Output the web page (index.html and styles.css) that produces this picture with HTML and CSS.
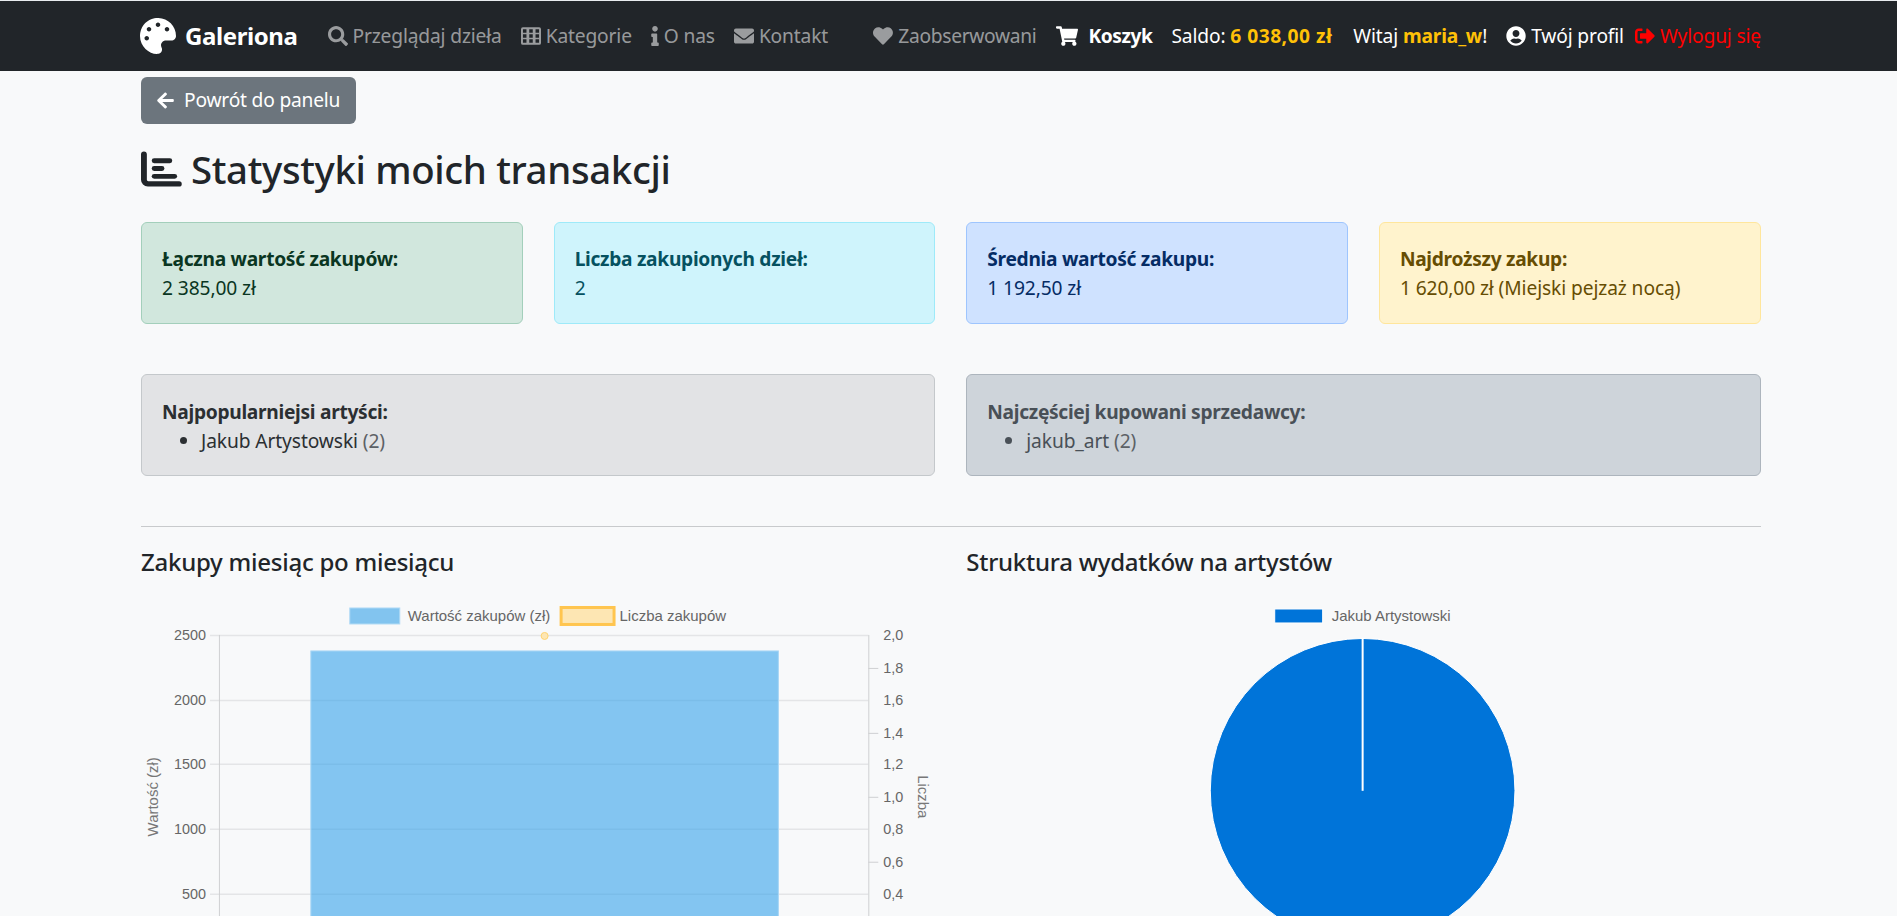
FILE: index.html
```html
<!DOCTYPE html>
<html lang="pl">
<head>
  <meta charset="UTF-8" />
  <meta name="viewport" content="width=device-width, initial-scale=1.0">
  <title>Statystyki moich transakcji - Galeriona</title>
  <link rel="stylesheet" href="styles.css">
</head>
<body>
  <nav class="navbar">
    <a class="brand" href="#">
      <svg class="brand-icon" viewBox="0 0 512 512"><path d="M204.3 5C104.9 24.4 24.8 104.3 5.2 203.4c-37 187 131.7 326.4 258.8 306.7 41.2-6.4 61.4-54.6 42.5-91.7-23.1-45.4 9.9-98.4 60.9-98.4h79.7c35.8 0 64.8-29.6 64.9-65.3C511.5 97.1 368.1-26.9 204.3 5zM96 320c-17.7 0-32-14.3-32-32s14.3-32 32-32 32 14.3 32 32-14.3 32-32 32zm32-128c-17.7 0-32-14.3-32-32s14.3-32 32-32 32 14.3 32 32-14.3 32-32 32zm128-64c-17.7 0-32-14.3-32-32s14.3-32 32-32 32 14.3 32 32-14.3 32-32 32zm128 64c-17.7 0-32-14.3-32-32s14.3-32 32-32 32 14.3 32 32-14.3 32-32 32z"/></svg>
      Galeriona
    </a>
    <div class="nav-links">
      <a class="nav-link" href="#"><svg class="icon" viewBox="0 0 512 512"><path d="M505 442.7L405.3 343c-4.5-4.5-10.6-7-17-7H372c27.6-35.3 44-79.7 44-128C416 93.1 322.9 0 208 0S0 93.1 0 208s93.1 208 208 208c48.3 0 92.7-16.4 128-44v16.3c0 6.4 2.5 12.5 7 17l99.7 99.7c9.4 9.4 24.6 9.4 33.9 0l28.3-28.3c9.4-9.4 9.4-24.6.1-34zM208 336c-70.7 0-128-57.2-128-128 0-70.7 57.2-128 128-128 70.7 0 128 57.2 128 128 0 70.7-57.2 128-128 128z"/></svg>Przeglądaj dzieła</a>
      <a class="nav-link" href="#"><svg class="icon" viewBox="0 0 512 512"><path fill-rule="evenodd" d="M48 32h416a48 48 0 0 1 48 48v352a48 48 0 0 1-48 48H48a48 48 0 0 1-48-48V80a48 48 0 0 1 48-48zM50 84v90h90V84zm161 0v90h90V84zm161 0v90h90V84zM50 211v90h90v-90zm161 0v90h90v-90zm161 0v90h90v-90zM50 338v90h90v-90zm161 0v90h90v-90zm161 0v90h90v-90z"/></svg>Kategorie</a>
      <a class="nav-link" href="#"><svg class="icon icon-info" viewBox="0 0 192 512"><path d="M20 424.229h20V279.771H20c-11.046 0-20-8.954-20-20V212c0-11.046 8.954-20 20-20h112c11.046 0 20 8.954 20 20v212.229h20c11.046 0 20 8.954 20 20V492c0 11.046-8.954 20-20 20H20c-11.046 0-20-8.954-20-20v-47.771c0-11.046 8.954-20 20-20zM96 0C56.235 0 24 32.235 24 72s32.235 72 72 72 72-32.235 72-72S135.764 0 96 0z"/></svg>O nas</a>
      <a class="nav-link" href="#"><svg class="icon" viewBox="0 0 512 512"><path d="M502.3 190.8c3.9-3.1 9.7-.2 9.7 4.7V400c0 26.5-21.5 48-48 48H48c-26.5 0-48-21.5-48-48V195.6c0-5 5.7-7.8 9.7-4.7 22.4 17.4 52.1 39.5 154.1 113.6 21.1 15.4 56.7 47.8 92.2 47.6 35.7.3 72-32.8 92.3-47.6 102-74.1 131.6-96.3 154-113.7zM256 320c23.2.4 56.6-29.2 73.4-41.4 132.7-96.3 142.8-104.7 173.4-128.7 5.8-4.5 9.2-11.5 9.2-18.9v-19c0-26.5-21.5-48-48-48H48C21.5 64 0 85.5 0 112v19c0 7.4 3.4 14.3 9.2 18.9 30.6 23.9 40.7 32.4 173.4 128.7 16.8 12.2 50.2 41.8 73.4 41.4z"/></svg>Kontakt</a>
    </div>
    <div class="nav-right">
      <a class="nav-link nav-watch" href="#"><svg class="icon" viewBox="0 0 512 512"><path d="M462.3 62.6C407.5 15.9 326 20.3 275.6 72.2L256 92.5l-19.6-20.3C186.1 20.3 104.5 15.9 49.7 62.6c-62.8 53.6-66.1 149.8-9.9 207.9l192.5 198.8c12.4 12.8 32.6 12.8 45 0l192.5-198.8c56.3-58.1 53-154.3-9.8-207.9z"/></svg>Zaobserwowani</a>
      <a class="nav-link nav-cart" href="#"><svg class="icon icon-cart" viewBox="0 0 576 512"><path d="M528.12 301.319l47.273-208C578.806 78.301 567.391 64 551.99 64H159.208l-9.166-44.81C147.758 8.021 137.93 0 126.529 0H24C10.745 0 0 10.745 0 24v16c0 13.255 10.745 24 24 24h69.883l70.248 343.435C147.325 417.1 136 435.222 136 456c0 30.928 25.072 56 56 56s56-25.072 56-56c0-15.674-6.447-29.835-16.824-40h209.647C430.447 426.165 424 440.326 424 456c0 30.928 25.072 56 56 56s56-25.072 56-56c0-22.172-12.888-41.332-31.579-50.405l5.517-24.276c3.413-15.018-8.002-29.319-23.403-29.319H218.117l-6.545-32h293.145c11.206 0 20.92-7.754 23.403-18.681z"/></svg>Koszyk</a>
      <span class="nav-text nav-saldo">Saldo: <b class="gold gold-amount">6 038,00 zł</b></span>
      <span class="nav-text">Witaj <b class="gold">maria_w</b>!</span>
      <a class="nav-link nav-profile" href="#"><svg class="icon" viewBox="0 0 496 512"><path d="M248 8C111 8 0 119 0 256s111 248 248 248 248-111 248-248S385 8 248 8zm0 96c48.6 0 88 39.4 88 88s-39.4 88-88 88-88-39.4-88-88 39.4-88 88-88zm0 344c-58.7 0-111.3-26.6-146.5-68.2 18.8-35.4 55.6-59.8 98.5-59.8 2.4 0 4.8.4 7.1 1.1 13 4.2 26.6 6.9 40.9 6.9 14.3 0 28-2.7 40.9-6.9 2.3-.7 4.7-1.1 7.1-1.1 42.9 0 79.7 24.4 98.5 59.8C359.3 421.4 306.7 448 248 448z"/></svg>Twój profil</a>
      <a class="nav-link nav-logout" href="#"><svg class="icon" viewBox="0 0 512 512"><path d="M497 273L329 441c-15 15-41 4.5-41-17v-96H152c-13.3 0-24-10.7-24-24v-96c0-13.3 10.7-24 24-24h136V88c0-21.4 25.9-32 41-17l168 168c9.3 9.4 9.3 24.6 0 34zM192 436v-40c0-6.6-5.4-12-12-12H96c-17.7 0-32-14.3-32-32V160c0-17.7 14.3-32 32-32h84c6.6 0 12-5.4 12-12V76c0-6.6-5.4-12-12-12H96c-53 0-96 43-96 96v192c0 53 43 96 96 96h84c6.6 0 12-5.4 12-12z"/></svg>Wyloguj się</a>
    </div>
  </nav>

  <main class="container">
    <a class="btn-back" href="#"><svg class="icon-back" viewBox="0 0 448 512"><path d="M257.5 445.1l-22.2 22.2c-9.4 9.4-24.6 9.4-33.9 0L7 273c-9.4-9.4-9.4-24.6 0-33.9L201.4 44.7c9.4-9.4 24.6-9.4 33.9 0l22.2 22.2c9.5 9.5 9.3 25-.4 34.3L136.6 216H424c13.3 0 24 10.7 24 24v32c0 13.3-10.7 24-24 24H136.6l120.5 114.8c9.8 9.3 10 24.8.4 34.3z"/></svg>Powrót do panelu</a>

    <h1 class="page-title">
      <svg class="title-icon" viewBox="0 0 42 36"><path d="M0 3a3 3 0 0 1 6 0v26a1.5 1.5 0 0 0 1.5 1.5H39a2.75 2.75 0 0 1 0 5.5H7a7 7 0 0 1-7-7z"/><rect x="11" y="7" width="21" height="5" rx="2.5"/><rect x="11" y="15" width="13" height="5" rx="2.5"/><rect x="11" y="23" width="26" height="5" rx="2.5"/></svg>
      Statystyki moich transakcji
    </h1>

    <section class="stats-row">
      <div class="alert alert-green"><strong>Łączna wartość zakupów:</strong><br>2 385,00 zł</div>
      <div class="alert alert-cyan"><strong>Liczba zakupionych dzieł:</strong><br>2</div>
      <div class="alert alert-blue"><strong>Średnia wartość zakupu:</strong><br>1 192,50 zł</div>
      <div class="alert alert-yellow"><strong>Najdroższy zakup:</strong><br>1 620,00 zł (Miejski pejzaż nocą)</div>
    </section>

    <section class="top-row">
      <div class="alert alert-light">
        <strong>Najpopularniejsi artyści:</strong>
        <ul><li>Jakub Artystowski <span class="count">(2)</span></li></ul>
      </div>
      <div class="alert alert-grey">
        <strong>Najczęściej kupowani sprzedawcy:</strong>
        <ul><li>jakub_art <span class="count">(2)</span></li></ul>
      </div>
    </section>

    <hr class="divider">

    <section class="charts-row">
      <div class="chart-col">
        <h2 class="chart-title">Zakupy miesiąc po miesiącu</h2>
        <svg class="chart" viewBox="0 0 795 400">
          <g class="legend">
            <rect x="209" y="13" width="50" height="16" fill="#82c4ef" stroke="#aed9f5"/>
            <text x="267" y="26">Wartość zakupów (zł)</text>
            <rect x="420.5" y="12.5" width="53" height="17" fill="#fde6b3" stroke="#ffc54f" stroke-width="3"/>
            <text x="479" y="26">Liczba zakupów</text>
          </g>
          <g class="grid">
            <line x1="69" x2="728" y1="40.5" y2="40.5"/>
            <line x1="69" x2="728" y1="105.5" y2="105.5"/>
            <line x1="69" x2="728" y1="169.5" y2="169.5"/>
            <line x1="69" x2="728" y1="234.5" y2="234.5"/>
            <line x1="69" x2="728" y1="299.5" y2="299.5"/>
            <line x1="69" x2="728" y1="364.5" y2="364.5"/>
          </g>
          <g class="ticks">
            <line x1="728" x2="738" y1="73.5" y2="73.5"/>
            <line x1="728" x2="738" y1="138.5" y2="138.5"/>
            <line x1="728" x2="738" y1="202.5" y2="202.5"/>
            <line x1="728" x2="738" y1="267.5" y2="267.5"/>
            <line x1="728" x2="738" y1="332.5" y2="332.5"/>
            <line x1="78.5" x2="78.5" y1="40" y2="400"/>
            <line x1="728.5" x2="728.5" y1="40" y2="400"/>
          </g>
          <rect class="bar" x="170" y="56" width="468" height="344"/>
          <circle class="dot" cx="404" cy="41" r="3.5"/>
          <g class="axis-left">
            <text x="65" y="45">2500</text>
            <text x="65" y="110">2000</text>
            <text x="65" y="174">1500</text>
            <text x="65" y="239">1000</text>
            <text x="65" y="304">500</text>
          </g>
          <g class="axis-right">
            <text x="743" y="45">2,0</text>
            <text x="743" y="78">1,8</text>
            <text x="743" y="110">1,6</text>
            <text x="743" y="143">1,4</text>
            <text x="743" y="174">1,2</text>
            <text x="743" y="207">1,0</text>
            <text x="743" y="239">0,8</text>
            <text x="743" y="272">0,6</text>
            <text x="743" y="304">0,4</text>
          </g>
          <text class="axis-title" transform="translate(17 202) rotate(-90)">Wartość (zł)</text>
          <text class="axis-title" transform="translate(778 202) rotate(90)">Liczba</text>
        </svg>
      </div>
      <div class="chart-col">
        <h2 class="chart-title">Struktura wydatków na artystów</h2>
        <svg class="chart" viewBox="0 0 795 400">
          <g class="legend">
            <rect x="309" y="14" width="48" height="14" fill="#0074d9" stroke="#fff"/>
            <text x="366" y="26">Jakub Artystowski</text>
          </g>
          <circle cx="397" cy="196" r="152.5" fill="#0074d9" stroke="#fff"/>
          <line x1="397" x2="397" y1="43" y2="196" stroke="#fff" stroke-width="2"/>
        </svg>
      </div>
    </section>
  </main>
</body>
</html>
```

FILE: styles.css
```css
:root {
  --font-main: "Noto Sans", "Open Sans", Arial, sans-serif;
  --gold: #ffc107;
}

html, body {
  height: 100%;
  overflow: hidden;
}

body {
  margin: 0;
  background: #f8f9fa;
  color: #212529;
  font-family: var(--font-main);
  font-size: 19.2px;
  line-height: 1.5;
  border-top: 1px solid #e9ecef;
  box-sizing: border-box;
}

a {
  text-decoration: none;
}

/* navbar */
.navbar {
  display: flex;
  align-items: center;
  height: 70px;
  padding: 0 136px 0 140px;
  background: #212529;
  white-space: nowrap;
}

.brand {
  display: flex;
  align-items: center;
  gap: 9px;
  color: #fff;
  font-size: 24px;
  font-weight: 700;
  letter-spacing: -0.4px;
  margin-right: 30px;
}

.brand-icon {
  width: 36px;
  height: 36px;
  fill: #fff;
}

.nav-links {
  display: flex;
  gap: 19px;
}

.nav-right {
  display: flex;
  align-items: center;
  gap: 19px;
  margin-left: auto;
}

.nav-link {
  display: flex;
  align-items: center;
  gap: 5px;
  color: rgba(255, 255, 255, 0.55);
  letter-spacing: -0.15px;
}

.nav-watch {
  letter-spacing: -0.3px;
}

.nav-text {
  color: #fff;
  letter-spacing: -0.15px;
}

.nav-saldo {
  margin-right: 2px;
}

.gold {
  color: var(--gold);
}

.gold-amount {
  letter-spacing: 0.5px;
}

.icon {
  width: 20px;
  height: 20px;
  fill: currentColor;
}

.icon-info {
  width: 8px;
}

.icon-cart {
  width: 22px;
  margin-right: 6px;
}

.nav-cart {
  color: #fff;
  font-weight: 700;
  letter-spacing: -0.45px;
}

.nav-profile {
  color: #fff;
}

.nav-logout {
  color: #ff0000;
  margin-left: -8px;
}

/* page */
.container {
  padding: 6px 136.5px 0 141px;
}

.btn-back {
  display: inline-flex;
  align-items: center;
  gap: 9px;
  height: 47px;
  padding: 0 16px 0 15px;
  box-sizing: border-box;
  background: #6c757d;
  color: #fff;
  border-radius: 6px;
  letter-spacing: -0.2px;
}

.icon-back {
  width: 19px;
  height: 19px;
  fill: #fff;
}

.page-title {
  display: flex;
  align-items: center;
  gap: 9px;
  margin: 19px 0 27px;
  height: 52px;
  font-size: 38.4px;
  font-weight: 500;
  letter-spacing: -0.36px;
  line-height: 52px;
}

.title-icon {
  width: 41px;
  height: 36px;
  fill: #212529;
}

.stats-row {
  display: grid;
  grid-template-columns: repeat(4, 1fr);
  gap: 31px;
}

.top-row {
  display: grid;
  grid-template-columns: repeat(2, 1fr);
  gap: 31px;
  margin-top: 50px;
}

.alert {
  height: 102px;
  box-sizing: border-box;
  padding: 21px 20px 20px;
  border: 1px solid transparent;
  border-radius: 6px;
  letter-spacing: -0.1px;
  line-height: 29px;
}

.top-row .alert {
  padding-top: 22px;
}

.alert strong {
  font-weight: 700;
  letter-spacing: -0.3px;
}

.alert ul {
  margin: 0;
  padding-left: 39px;
}

.alert-green {
  background: #d1e7dd;
  border-color: #a3cfbb;
  color: #0a3622;
}

.alert-cyan {
  background: #cff4fc;
  border-color: #9eeaf9;
  color: #055160;
}

.alert-blue {
  background: #cfe2ff;
  border-color: #9ec5fe;
  color: #052c65;
}

.alert-yellow {
  background: #fff3cd;
  border-color: #ffe69c;
  color: #664d03;
}

.alert-light {
  background: #e2e3e5;
  border-color: #c4c8cb;
  color: #2b2f32;
}

.alert-grey {
  background: #ced4da;
  border-color: #adb5bd;
  color: #495057;
}

.count {
  color: #5c6166;
}

.divider {
  margin: 50px 0 0;
  border: 0;
  border-top: 1px solid #c8cacc;
}

.charts-row {
  display: grid;
  grid-template-columns: repeat(2, 1fr);
  gap: 31px;
}

.chart-title {
  margin: 18px 0 16px;
  font-size: 24px;
  font-weight: 500;
  letter-spacing: -0.25px;
  line-height: 34px;
}

/* charts */
.chart {
  display: block;
  width: 100%;
  font-family: "Liberation Sans", Arial, sans-serif;
  font-size: 15px;
  fill: #666;
}

.grid line {
  stroke: #e4e5e7;
  stroke-width: 1.5;
}

.ticks line {
  stroke: #cfd0d2;
}

.bar {
  fill: rgba(54, 162, 235, 0.6);
  stroke: #a9d6f5;
}

.dot {
  fill: #fde6b3;
  stroke: #ffd36f;
}

.axis-left text {
  text-anchor: end;
  font-size: 14.4px;
}

.axis-right text {
  font-size: 14.4px;
}

.axis-title {
  text-anchor: middle;
  font-size: 15px;
  fill: #777;
}
```
